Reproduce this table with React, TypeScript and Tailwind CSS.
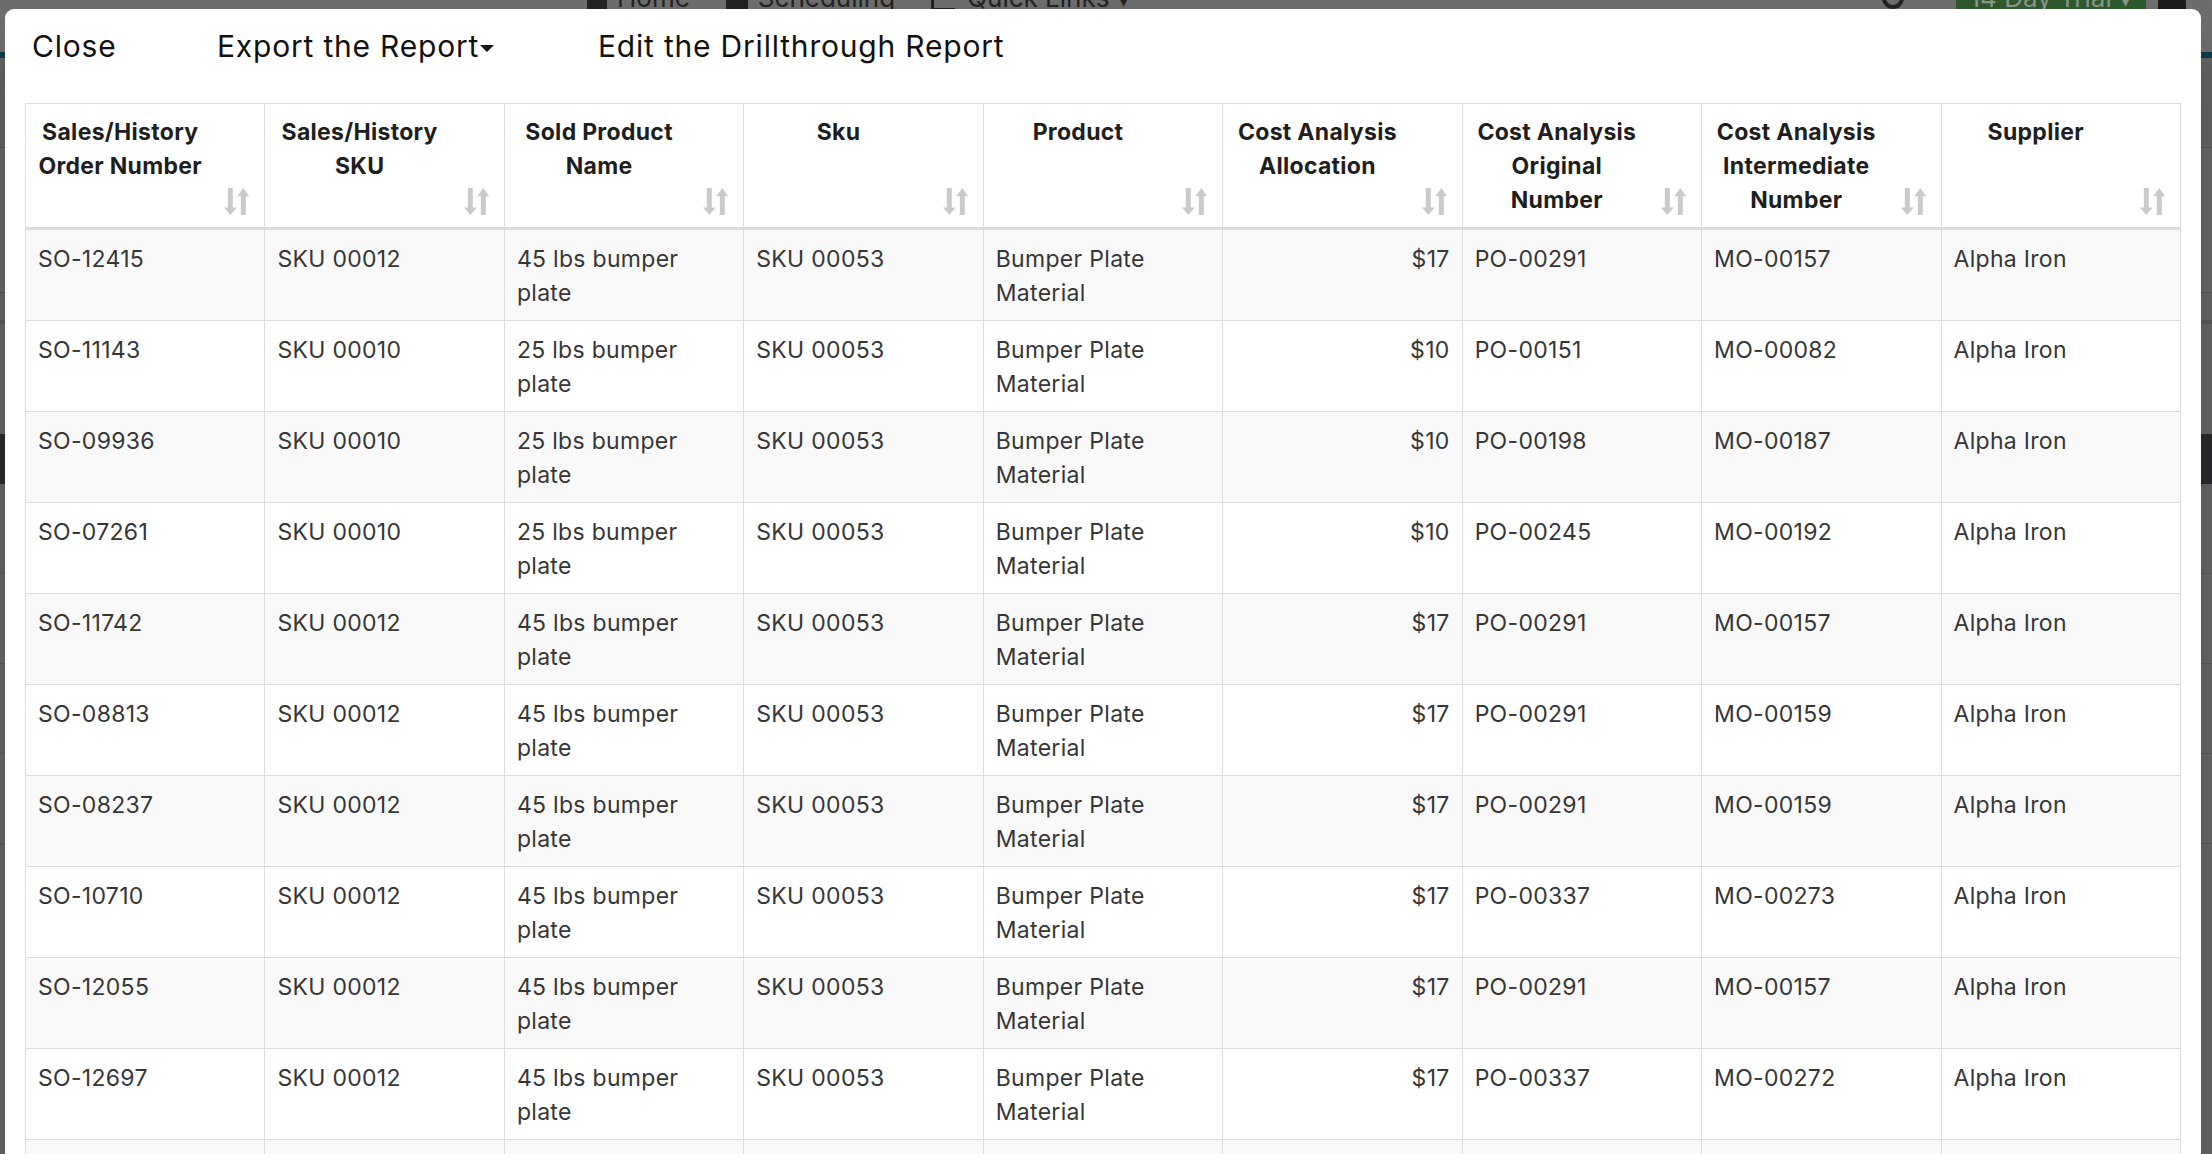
import React from 'react';

type Row = {
  order: string;
  sku: string;
  name: string;
  product: string;
  cost: string;
  po: string;
  mo: string;
};

const HEADERS = [
  'Sales/History Order Number',
  'Sales/History SKU',
  'Sold Product Name',
  'Sku',
  'Product',
  'Cost Analysis Allocation',
  'Cost Analysis Original Number',
  'Cost Analysis Intermediate Number',
  'Supplier',
];

const ROWS: Row[] = [
  { order: 'SO-12415', sku: 'SKU 00012', name: '45 lbs bumper plate', product: 'Bumper Plate Material', cost: '$17', po: 'PO-00291', mo: 'MO-00157' },
  { order: 'SO-11143', sku: 'SKU 00010', name: '25 lbs bumper plate', product: 'Bumper Plate Material', cost: '$10', po: 'PO-00151', mo: 'MO-00082' },
  { order: 'SO-09936', sku: 'SKU 00010', name: '25 lbs bumper plate', product: 'Bumper Plate Material', cost: '$10', po: 'PO-00198', mo: 'MO-00187' },
  { order: 'SO-07261', sku: 'SKU 00010', name: '25 lbs bumper plate', product: 'Bumper Plate Material', cost: '$10', po: 'PO-00245', mo: 'MO-00192' },
  { order: 'SO-11742', sku: 'SKU 00012', name: '45 lbs bumper plate', product: 'Bumper Plate Material', cost: '$17', po: 'PO-00291', mo: 'MO-00157' },
  { order: 'SO-08813', sku: 'SKU 00012', name: '45 lbs bumper plate', product: 'Bumper Plate Material', cost: '$17', po: 'PO-00291', mo: 'MO-00159' },
  { order: 'SO-08237', sku: 'SKU 00012', name: '45 lbs bumper plate', product: 'Bumper Plate Material', cost: '$17', po: 'PO-00291', mo: 'MO-00159' },
  { order: 'SO-10710', sku: 'SKU 00012', name: '45 lbs bumper plate', product: 'Bumper Plate Material', cost: '$17', po: 'PO-00337', mo: 'MO-00273' },
  { order: 'SO-12055', sku: 'SKU 00012', name: '45 lbs bumper plate', product: 'Bumper Plate Material', cost: '$17', po: 'PO-00291', mo: 'MO-00157' },
  { order: 'SO-12697', sku: 'SKU 00012', name: '45 lbs bumper plate', product: 'Bumper Plate Material', cost: '$17', po: 'PO-00337', mo: 'MO-00272' },
  { order: 'SO-10388', sku: 'SKU 00012', name: '45 lbs bumper plate', product: 'Bumper Plate Material', cost: '$17', po: 'PO-00337', mo: 'MO-00272' },
];

// datatables-style double arrow, drawn to match the grey glyph in the header
function SortIcon() {
  return (
    <svg
      width="25"
      height="27"
      viewBox="0 0 25 27"
      fill="#cacaca"
      className="absolute bottom-[12px] right-[15px]"
    >
      <rect x="3.8" y="0" width="5" height="20" />
      <polygon points="0,19.5 12.7,19.5 6.35,27" />
      <polygon points="19.3,0 25.3,8.3 13.3,8.3" />
      <rect x="16.8" y="8" width="5" height="19" />
    </svg>
  );
}

// the page behind the dialog, only a sliver of it shows
function BackdropPage() {
  return (
    <div className="flex flex-col">
      <div className="h-[52px] bg-[#6e6e6e]">
        <div className="-mt-[15px] flex items-start text-[26px] leading-none text-[#232323]">
          <div className="ml-[587px] flex items-start gap-[10px]">
            <span className="mt-[4px] h-[22px] w-[20px] bg-[#232323]" />
            <span>Home</span>
          </div>
          <div className="ml-[36px] flex items-start gap-[10px]">
            <span className="mt-[4px] h-[22px] w-[22px] bg-[#232323]" />
            <span>Scheduling</span>
          </div>
          <div className="ml-[36px] flex items-start gap-[12px]">
            <span className="mt-[4px] h-[22px] w-[24px] border-b-[3px] border-l-[3px] border-[#232323]" />
            <span>Quick Links ▾</span>
          </div>
          <span className="ml-[752px] mt-[2px] h-[22px] w-[22px] rounded-full border-[4px] border-[#232323]" />
          <div className="ml-[52px] flex h-[26px] w-[190px] justify-center rounded-b-[3px] bg-[#2d5a2c] text-[#8a968a]">
            14 Day Trial ▾
          </div>
          <span className="ml-[12px] mt-[4px] h-[22px] w-[28px] rounded-t-full bg-[#1c1c1c]" />
        </div>
      </div>
      <div className="h-[6px] bg-[#0c3e4b]" />
      <div className="h-[90px] border-b border-[#555] bg-[#626262]" />
      <div className="h-[145px] border-b border-[#555] bg-[#666666]" />
      <div className="h-[31px] border-b-[4px] border-[#575757] bg-[#646464]" />
      <div className="h-[110px] bg-[#646464]" />
      <div className="h-[50px] bg-[#2a2a2e]" />
      <div className="h-[90px] border-b border-[#585858] bg-[#646464]" />
      <div className="h-[90px] border-b border-[#585858] bg-[#666666]" />
      <div className="h-[90px] border-b border-[#585858] bg-[#646464]" />
      <div className="h-[90px] border-b border-[#585858] bg-[#666666]" />
      <div className="h-[200px] bg-[#646464]" />
    </div>
  );
}

export default function App() {
  return (
    <div
      className="relative h-[1154px] w-[2212px] overflow-hidden bg-[#646464]"
      style={{ fontFamily: 'Inter, "Noto Sans", sans-serif' }}
    >
      <BackdropPage />

      <div className="absolute left-[5px] top-[9px] w-[2196px] rounded-[9px] bg-white pb-[40px] shadow-2xl">
        <div className="flex h-[94px] items-start pl-[27px] pt-[17px] text-[30px] leading-[40px] tracking-[0.8px] text-[#111]">
          <button type="button" className="w-[185px] text-left">Close</button>
          <button type="button" className="flex w-[381px] items-center">
            Export the Report
            <span className="ml-[1px] mt-[4px] h-0 w-0 border-l-[7px] border-r-[7px] border-t-[7px] border-l-transparent border-r-transparent border-t-[#111]" />
          </button>
          <button type="button" className="text-left">Edit the Drillthrough Report</button>
        </div>

        <div className="pl-[20px]">
          <table className="w-[2156px] table-fixed border-collapse border border-[#dddddd] text-[23px] leading-[34px] tracking-[0.3px]">
            <thead>
              <tr>
                {HEADERS.map((h) => (
                  <th
                    key={h}
                    className="relative border border-b-[3px] border-[#dddddd] pb-[10px] pl-[12px] pr-[62px] pt-[11px] text-center align-top font-bold text-[#1e1e1e]"
                  >
                    {h}
                    <SortIcon />
                  </th>
                ))}
              </tr>
            </thead>
            <tbody>
              {ROWS.map((r, i) => {
                const cells = [r.order, r.sku, r.name, 'SKU 00053', r.product, r.cost, r.po, r.mo, 'Alpha Iron'];
                return (
                  <tr key={r.order} className={i % 2 === 0 ? 'bg-[#f9f9f9]' : 'bg-white'}>
                    {cells.map((c, j) => (
                      <td
                        key={j}
                        className={`border border-[#dddddd] px-[12px] pb-[10px] pt-[12px] align-top text-[#363636] ${
                          j === 5 ? 'text-right' : 'text-left'
                        }`}
                      >
                        {c}
                      </td>
                    ))}
                  </tr>
                );
              })}
            </tbody>
          </table>
        </div>
      </div>
    </div>
  );
}
